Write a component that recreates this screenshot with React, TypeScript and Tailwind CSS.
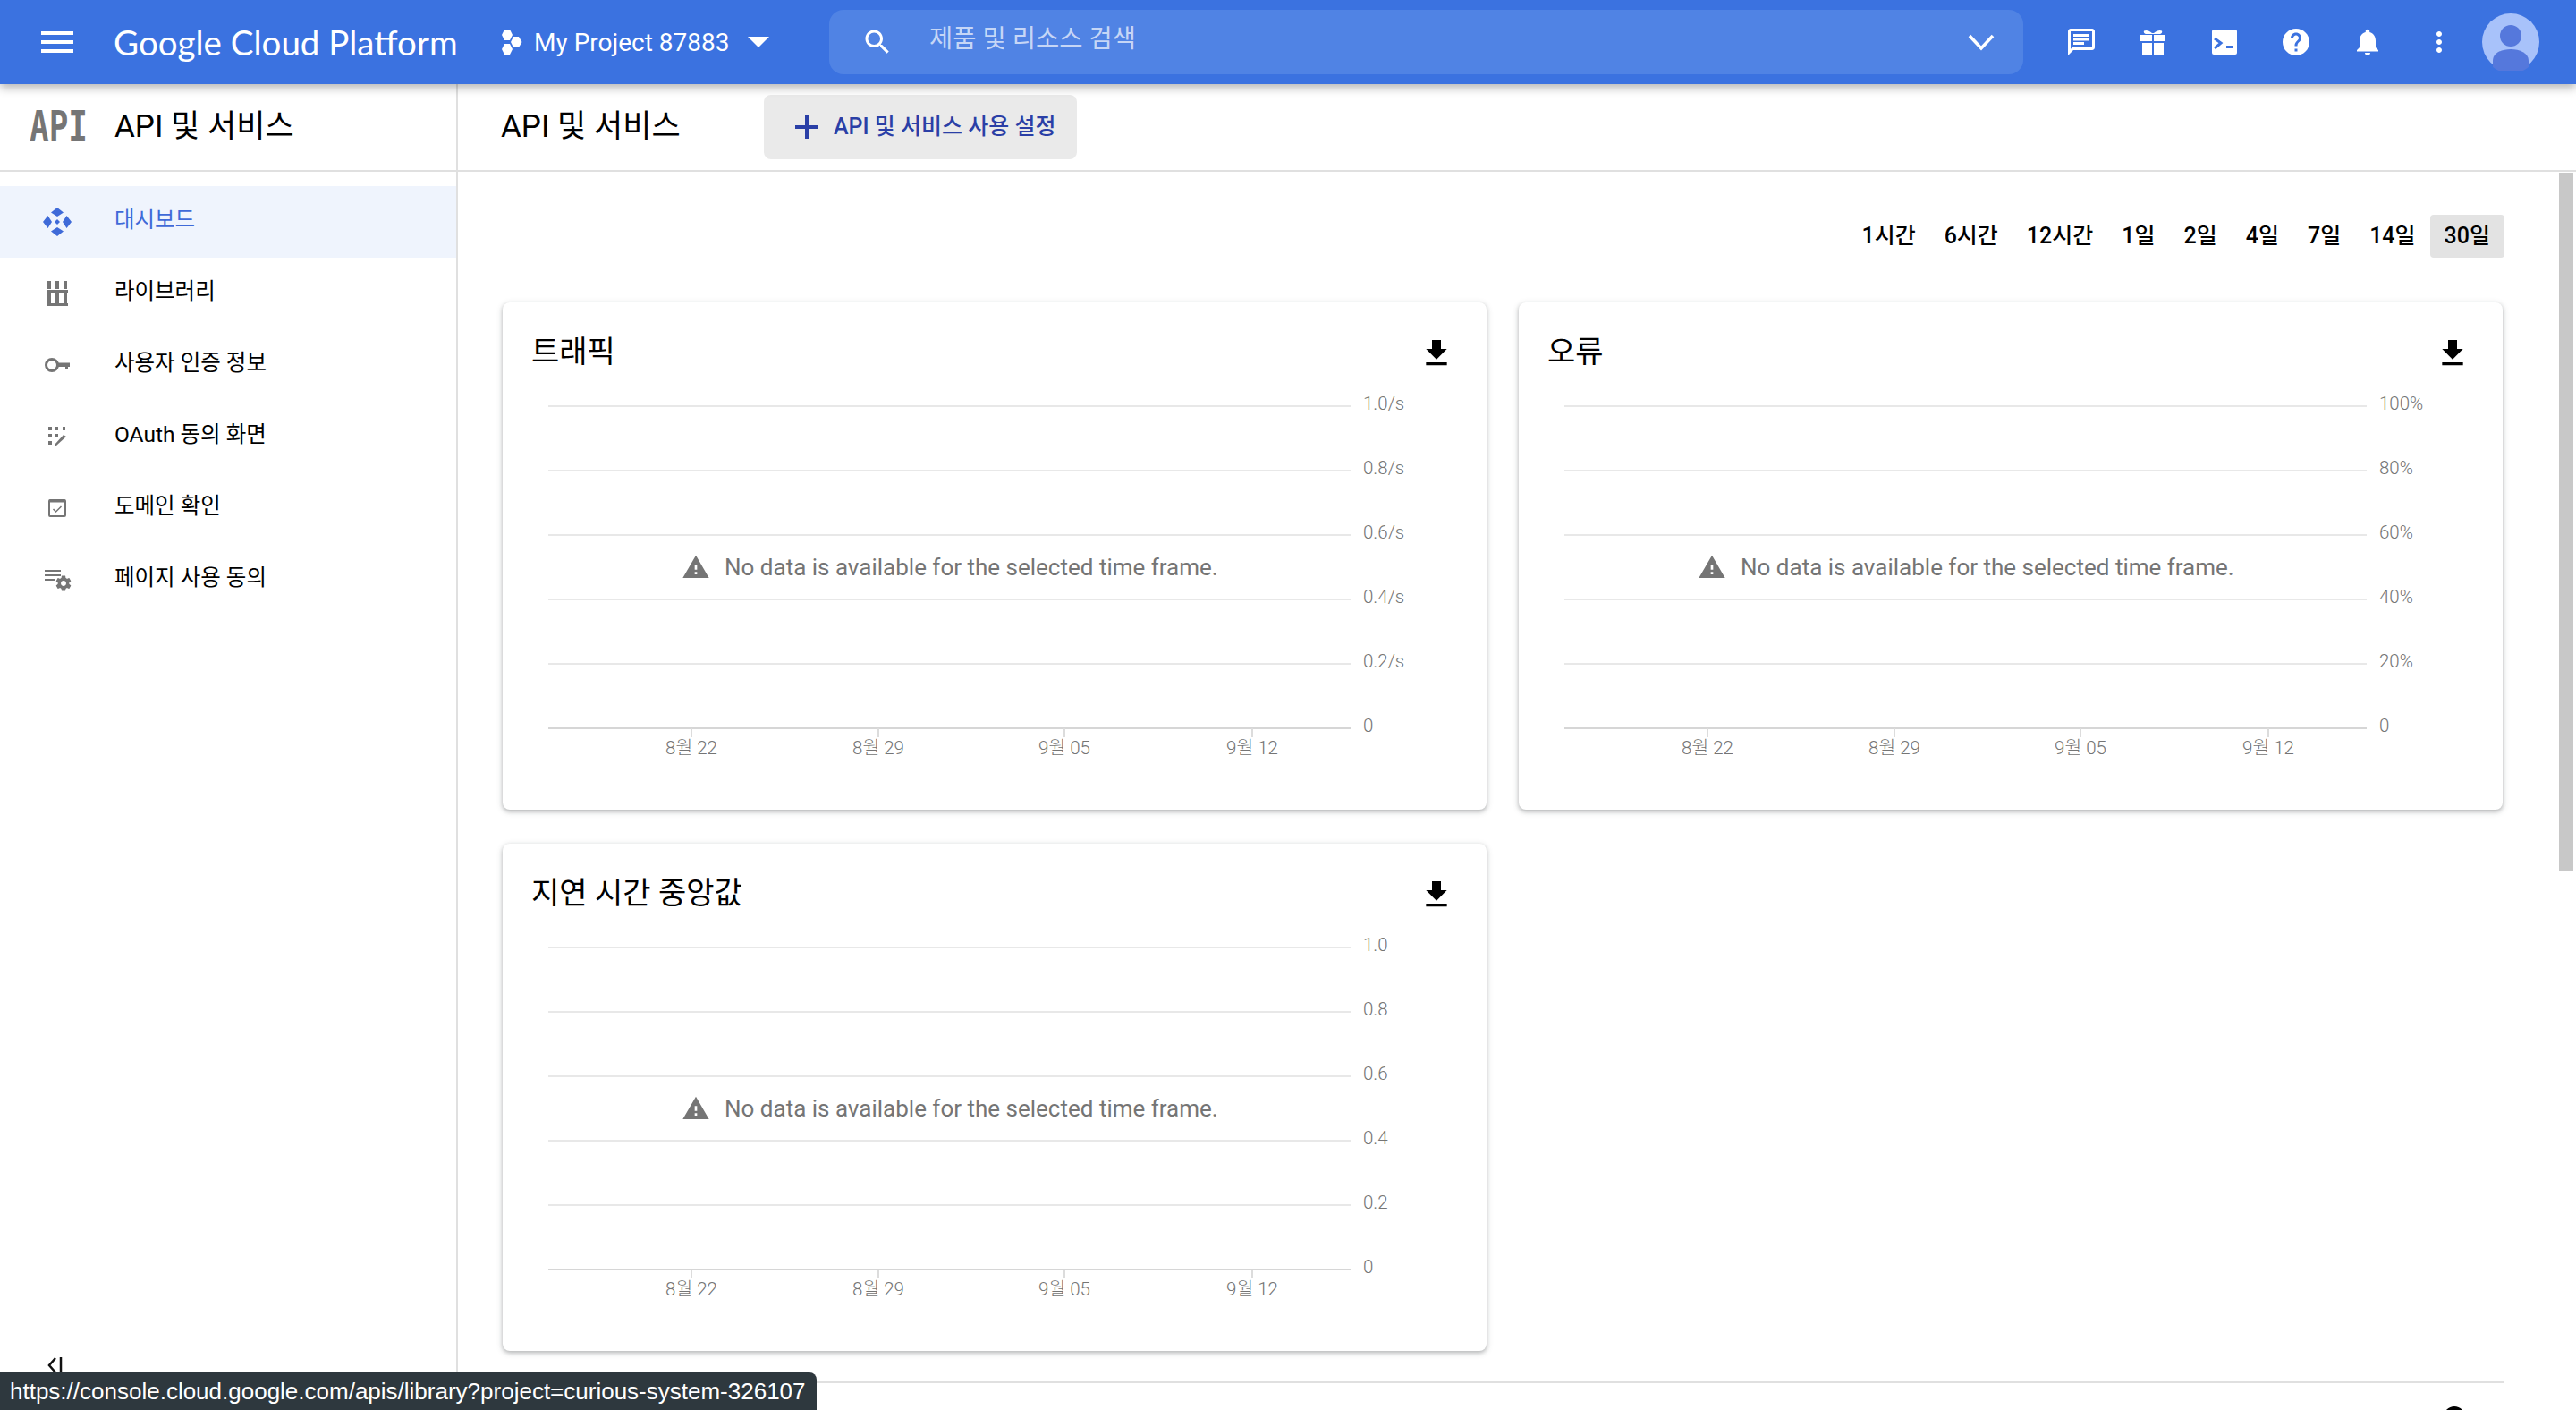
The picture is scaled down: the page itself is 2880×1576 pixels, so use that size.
const navItems = [
  { label: "대시보드", icon: <DashboardIcon />, active: true },
  { label: "라이브러리", icon: <LibraryIcon /> },
  { label: "사용자 인증 정보", icon: <KeyIcon /> },
  { label: "OAuth 동의 화면", icon: <OauthIcon /> },
  { label: "도메인 확인", icon: <CheckIcon /> },
  { label: "페이지 사용 동의", icon: <ListGearIcon /> },
];

const ranges = ["1시간", "6시간", "12시간", "1일", "2일", "4일", "7일", "14일", "30일"];

const charts = [
  { title: "트래픽", labels: ["1.0/s", "0.8/s", "0.6/s", "0.4/s", "0.2/s", "0"] },
  { title: "오류", labels: ["100%", "80%", "60%", "40%", "20%", "0"] },
  { title: "지연 시간 중앙값", labels: ["1.0", "0.8", "0.6", "0.4", "0.2", "0"] },
];

const ticks = [
  { x: 211, label: "8월 22" },
  { x: 420, label: "8월 29" },
  { x: 628, label: "9월 05" },
  { x: 838, label: "9월 12" },
];

function MdIcon({ d, size = 36, className = "" }: { d: string; size?: number; className?: string }) {
  return (
    <svg width={size} height={size} viewBox="0 0 24 24" fill="currentColor" className={`shrink-0 ${className}`}>
      <path d={d} />
    </svg>
  );
}

function DashboardIcon() {
  return (
    <svg width="32" height="32" viewBox="0 0 32 32" fill="currentColor">
      <path d="M16 0l7 5.500-7 4.500-7-4.500zM16 32l-7-5.500 7-4.500 7 4.500zM0 16l5.500-7 4.500 7-4.500 7zM32 16l-5.500 7-4.500-7 4.500-7z" />
      <path d="M16 13l3 3-3 3-3-3z" />
    </svg>
  );
}

function LibraryIcon() {
  return (
    <svg width="32" height="32" viewBox="0 0 32 32" fill="#757575">
      <rect x="5" y="2" width="4" height="9" />
      <rect x="14" y="2" width="4" height="9" />
      <rect x="23" y="2" width="4" height="9" />
      <rect x="4" y="12" width="24" height="3" />
      <rect x="5" y="16" width="4" height="11" />
      <rect x="14" y="16" width="4" height="11" />
      <rect x="23" y="16" width="4" height="11" />
      <rect x="4" y="27" width="24" height="3" />
    </svg>
  );
}

function KeyIcon() {
  return (
    <svg width="32" height="32" viewBox="0 0 32 32" fill="#757575">
      <circle cx="10" cy="16" r="6.500" fill="none" stroke="#757575" strokeWidth="3" />
      <path d="M16 13.500h14v4.500h-2v3h-3v-3H16z" />
    </svg>
  );
}

function OauthIcon() {
  return (
    <svg width="32" height="32" viewBox="0 0 32 32" fill="#757575">
      <rect x="6" y="5" width="4" height="4" />
      <rect x="14" y="5" width="3" height="4" />
      <rect x="22" y="5" width="3" height="4" />
      <rect x="6" y="13" width="4" height="4" />
      <rect x="14" y="13" width="3" height="4" />
      <rect x="6" y="21" width="4" height="4" />
      <path d="M13 25l10-11 3 2-11 10h-2z" />
    </svg>
  );
}

function CheckIcon() {
  return (
    <svg width="32" height="32" viewBox="0 0 32 32" fill="none" stroke="#757575">
      <rect x="7" y="7" width="18" height="18" rx="1" strokeWidth="2" />
      <path d="M7 8h18" strokeWidth="3" />
      <path d="M11.500 17l3 3 6-6" strokeWidth="1.500" />
    </svg>
  );
}

function ListGearIcon() {
  return (
    <svg width="32" height="32" viewBox="0 0 32 32" fill="#757575">
      <rect x="2" y="5" width="18" height="2" />
      <rect x="2" y="10" width="18" height="2" />
      <rect x="2" y="15" width="12" height="2" />
      <g transform="translate(12.800 9.800) scale(0.85)">
        <path d="M19.430 12.980c.040-.320.070-.640.070-.980s-.030-.660-.070-.980l2.110-1.650c.190-.150.240-.420.120-.640l-2-3.460c-.120-.220-.390-.300-.610-.220l-2.490 1c-.520-.400-1.080-.730-1.690-.980l-.380-2.650C14.460 2.180 14.250 2 14 2h-4c-.250 0-.460.180-.490.420l-.380 2.650c-.610.250-1.170.590-1.690.980l-2.490-1c-.230-.090-.490 0-.610.220l-2 3.460c-.130.220-.070.490.120.640l2.110 1.650c-.040.320-.070.650-.070.980s.030.660.070.980l-2.110 1.650c-.190.150-.240.420-.120.640l2 3.460c.120.220.390.300.610.220l2.490-1c.520.400 1.080.730 1.690.980l.380 2.650c.030.240.240.420.490.420h4c.250 0 .460-.180.490-.420l.380-2.650c.610-.250 1.170-.590 1.690-.980l2.490 1c.230.090.490 0 .610-.220l2-3.460c.120-.220.070-.490-.120-.640l-2.110-1.650zM12 15.500c-1.930 0-3.500-1.570-3.500-3.500s1.570-3.500 3.500-3.500 3.500 1.570 3.500 3.500-1.570 3.500-3.500 3.500z" />
      </g>
    </svg>
  );
}

function GiftIcon() {
  return (
    <svg width="36" height="36" viewBox="0 0 36 36" fill="#fff" className="shrink-0">
      <path d="M8 5.500c2.500-1.500 6 0 9 2.500h2c3-2.500 6.500-4 9-2.500.8 1.500-.5 3-2 3.500H10c-1.500-.5-2.800-2-2-3.500z" />
      <path d="M4 10h13v7H4zM19 10h13v7H19z" />
      <path d="M6 19h11v14H7a1 1 0 0 1-1-1zM19 19h11v13a1 1 0 0 1-1 1H19z" />
    </svg>
  );
}

function TerminalIcon() {
  return (
    <svg width="36" height="36" viewBox="0 0 36 36" className="shrink-0">
      <rect x="4" y="4" width="28" height="28" rx="2" fill="#fff" />
      <path d="M7 14l7 5-7 6" fill="none" stroke="#3b72e0" strokeWidth="3" />
      <rect x="20" y="22" width="8" height="3" fill="#3b72e0" />
    </svg>
  );
}

function ProjectIcon() {
  return (
    <svg width="28" height="30" viewBox="0 0 28 30" fill="#fff" className="shrink-0">
      <path d="M7 1h6l3 6-3 6H7L4 7z" />
      <path d="M7 17h6l3 6-3 6H7l-3-6z" />
      <path d="M17 9h6l3.500 6-3.500 6h-6l-3-6z" />
    </svg>
  );
}

function ChartCard({ title, labels }: { title: string; labels: string[] }) {
  return (
    <div className="relative h-[567px] rounded-lg bg-white shadow-[0_2px_4px_rgba(60,64,67,0.3),0_2px_6px_2px_rgba(60,64,67,0.1)]">
      <div className="flex h-[96px] items-start justify-between pl-8 pr-9 pt-[37px]">
        <h2 className="-translate-y-0.5 text-[34px] leading-[40px] text-black">{title}</h2>
        <MdIcon d="M19 9h-4V3H9v6H5l7 7 7-7zM5 18v2h14v-2H5z" size={40} className="text-black" />
      </div>
      <svg width="1100" height="471" viewBox="0 0 1100 471" className="block">
        {[20, 92, 164, 236, 308, 380].map((y, i) => (
          <g key={y}>
            <line x1="51" x2="948" y1={y} y2={y} stroke={i === 5 ? "#d6d6d6" : "#e8e8e8"} strokeWidth="2" />
            <text x="962" y={y + 4} fontSize="20.500" fontWeight="300" fill="#757575">
              {labels[i]}
            </text>
          </g>
        ))}
        {ticks.map((t) => (
          <g key={t.x}>
            <line x1={t.x} x2={t.x} y1="380" y2="390" stroke="#dcdcdc" strokeWidth="2" />
            <text x={t.x} y="409" fontSize="20.500" fontWeight="300" fill="#757575" textAnchor="middle">
              {t.label}
            </text>
          </g>
        ))}
      </svg>
      <div className="absolute left-[200px] top-[280px] flex items-center gap-4 text-[26px] leading-8 text-[#757575]">
        <MdIcon d="M1 21h22L12 2 1 21zm12-3h-2v-2h2v2zm0-4h-2v-4h2v4z" size={32} />
        <span>No data is available for the selected time frame.</span>
      </div>
    </div>
  );
}

export default function App() {
  return (
    <div className="relative flex h-[1576px] w-[2880px] flex-col overflow-hidden bg-white font-['Roboto','Noto_Sans_CJK_KR',sans-serif] text-black">
      <header className="relative z-10 flex h-[94px] shrink-0 items-center bg-[#3b72e0] shadow-[0_4px_10px_rgba(0,0,0,0.3)]">
        <MdIcon d="M3 18h18v-2H3v2zm0-5h18v-2H3v2zm0-7v2h18V6H3z" size={48} className="ml-10 text-white" />
        <span className="ml-[39px] w-[390px] font-['Lato',sans-serif] text-[38.500px] leading-none whitespace-nowrap text-white">
          Google Cloud Platform
        </span>
        <div className="ml-[40px] flex w-[370px] items-center text-white">
          <ProjectIcon />
          <span className="ml-[12px] translate-y-px text-[28px] whitespace-nowrap">My Project 87883</span>
          <span className="ml-[21px] h-0 w-0 border-x-[12px] border-t-[12px] border-x-transparent border-t-white" />
        </div>
        <div className="flex h-[72px] w-[1335px] items-center rounded-2xl bg-[#5083e4] pl-[36px] pr-8 text-white">
          <MdIcon d="M15.500 14h-.790l-.280-.270C15.410 12.590 16 11.110 16 9.500 16 5.910 13.090 3 9.500 3S3 5.910 3 9.500 5.910 16 9.500 16c1.610 0 3.090-.590 4.230-1.570l.270.280v.790l5 4.990L20.490 19l-4.990-5zm-6 0C7.010 14 5 11.990 5 9.500S7.010 5 9.500 5 14 7.010 14 9.500 11.990 14 9.500 14z" size={36} />
          <span className="ml-[40px] -translate-y-[3px] text-[28.500px] text-[#c6d6f6]">제품 및 리소스 검색</span>
          <svg width="30" height="20" viewBox="0 0 30 20" fill="none" stroke="#fff" strokeWidth="3.500" className="ml-auto">
            <path d="M2 3l13 14L28 3" />
          </svg>
        </div>
        <div className="ml-[25px] flex items-center">
          <button className="flex w-[80px] justify-center text-white">
            <MdIcon d="M20 2H4c-1.100 0-1.990.900-1.990 2L2 22l4-4h14c1.100 0 2-.900 2-2V4c0-1.100-.900-2-2-2zm0 14H5.170L4 17.170V4h16v12zM6 12h8v2H6zm0-3h12v2H6zm0-3h12v2H6z" />
          </button>
          <button className="flex w-[80px] justify-center">
            <GiftIcon />
          </button>
          <button className="flex w-[80px] justify-center">
            <TerminalIcon />
          </button>
          <button className="flex w-[80px] justify-center text-white">
            <MdIcon d="M12 2C6.480 2 2 6.480 2 12s4.480 10 10 10 10-4.480 10-10S17.520 2 12 2zm1 17h-2v-2h2v2zm2.070-7.750l-.900.920C13.450 12.900 13 13.500 13 15h-2v-.500c0-1.100.450-2.100 1.170-2.830l1.240-1.260c.370-.360.590-.860.590-1.410 0-1.100-.900-2-2-2s-2 .900-2 2H8c0-2.210 1.790-4 4-4s4 1.790 4 4c0 .880-.360 1.680-.930 2.250z" />
          </button>
          <button className="flex w-[80px] justify-center text-white">
            <MdIcon d="M12 22c1.100 0 2-.900 2-2h-4c0 1.100.890 2 2 2zm6-6v-5c0-3.070-1.640-5.640-4.500-6.320V4c0-.830-.670-1.500-1.500-1.500s-1.500.670-1.500 1.500v.680C7.630 5.360 6 7.920 6 11v5l-2 2v1h16v-1l-2-2z" />
          </button>
          <button className="flex w-[80px] justify-center text-white">
            <MdIcon d="M12 8c1.100 0 2-.900 2-2s-.900-2-2-2-2 .900-2 2 .900 2 2 2zm0 2c-1.100 0-2 .900-2 2s.900 2 2 2 2-.900 2-2-.900-2-2-2zm0 6c-1.100 0-2 .900-2 2s.900 2 2 2 2-.900 2-2-.900-2-2-2z" />
          </button>
          <svg width="64" height="64" viewBox="0 0 64 64" className="ml-[8px] shrink-0">
            <circle cx="32" cy="32" r="32" fill="#a8c2fa" />
            <ellipse cx="32" cy="25" rx="12" ry="12" fill="#5578dc" />
            <path d="M12 60V53c0-9 10-13 20-13s20 4 20 13v7a32 32 0 0 1-40 0z" fill="#5578dc" />
          </svg>
        </div>
      </header>

      <div className="flex min-h-0 flex-1">
        <aside className="relative flex w-[512px] shrink-0 flex-col border-r-2 border-[#e0e0e0]">
          <div className="flex h-[98px] shrink-0 items-center border-b-2 border-[#e0e0e0]">
            <span className="ml-[33px] w-[63px] origin-center scale-y-[1.35] font-['DejaVu_Sans_Mono',monospace] text-[36px] leading-none font-bold text-[#757575]">
              API
            </span>
            <span className="ml-[32px] text-[35px] whitespace-nowrap">API 및 서비스</span>
          </div>
          <nav className="pt-4">
            {navItems.map((item) => (
              <div
                key={item.label}
                className={
                  item.active
                    ? "flex h-[80px] items-center bg-[#eff4fd] text-[#3f6ad8]"
                    : "flex h-[80px] items-center"
                }
              >
                <span className="ml-[48px] flex w-[32px] justify-center text-[#3f6ad8]">{item.icon}</span>
                <span className="ml-[48px] -translate-y-0.5 text-[24.500px] whitespace-nowrap">{item.label}</span>
              </div>
            ))}
          </nav>
          <svg width="24" height="24" viewBox="0 0 24 24" fill="none" stroke="#111" strokeWidth="2.500" className="absolute bottom-[38px] left-[50px]">
            <path d="M12 4l-7 8 7 8M18 3v18" />
          </svg>
        </aside>

        <main className="flex min-w-0 flex-1 flex-col">
          <div className="flex h-[98px] shrink-0 items-center border-b-2 border-[#e0e0e0] pl-[48px]">
            <h1 className="w-[294px] text-[35px] whitespace-nowrap">API 및 서비스</h1>
            <button className="flex h-[72px] w-[350px] items-center rounded-lg bg-[#eaeaea] pl-[32px] text-[#2a3fa6]">
              <svg width="32" height="32" viewBox="0 0 32 32" fill="currentColor">
                <path d="M14 3h4v11h11v4H18v11h-4V18H3v-4h11z" />
              </svg>
              <span className="ml-[14px] text-[25px] font-medium whitespace-nowrap">API 및 서비스 사용 설정</span>
            </button>
          </div>

          <div className="pl-[50px] pr-[80px]">
            <div className="mt-[48px] flex justify-end text-[25px] font-medium">
              {ranges.map((r) => (
                <button
                  key={r}
                  className={r === "30일" ? "h-[48px] rounded bg-[#e3e3e3] px-4" : "h-[48px] px-4"}
                >
                  {r}
                </button>
              ))}
            </div>
            <div className="mr-[2px] mt-[50px] grid grid-cols-2 gap-x-[36px] gap-y-[38px]">
              {charts.map((c) => (
                <ChartCard key={c.title} title={c.title} labels={c.labels} />
              ))}
            </div>
            <div className="mt-[34px] h-[2px] bg-[#e0e0e0]" />
          </div>
        </main>
      </div>

      <div className="absolute right-[3px] top-[193px] h-[780px] w-4 bg-[#c8c8c8]" />
      <div className="absolute bottom-[-20px] left-[2732px] h-6 w-6 rounded-full bg-black" />
      <div className="absolute bottom-0 left-0 z-20 flex h-[42px] w-[913px] items-center rounded-tr-lg bg-[#2e383e] pl-[11px] font-['Liberation_Sans',sans-serif] text-[26px] whitespace-nowrap text-white">
        https://console.cloud.google.com/apis/library?project=curious-system-326107
      </div>
    </div>
  );
}
